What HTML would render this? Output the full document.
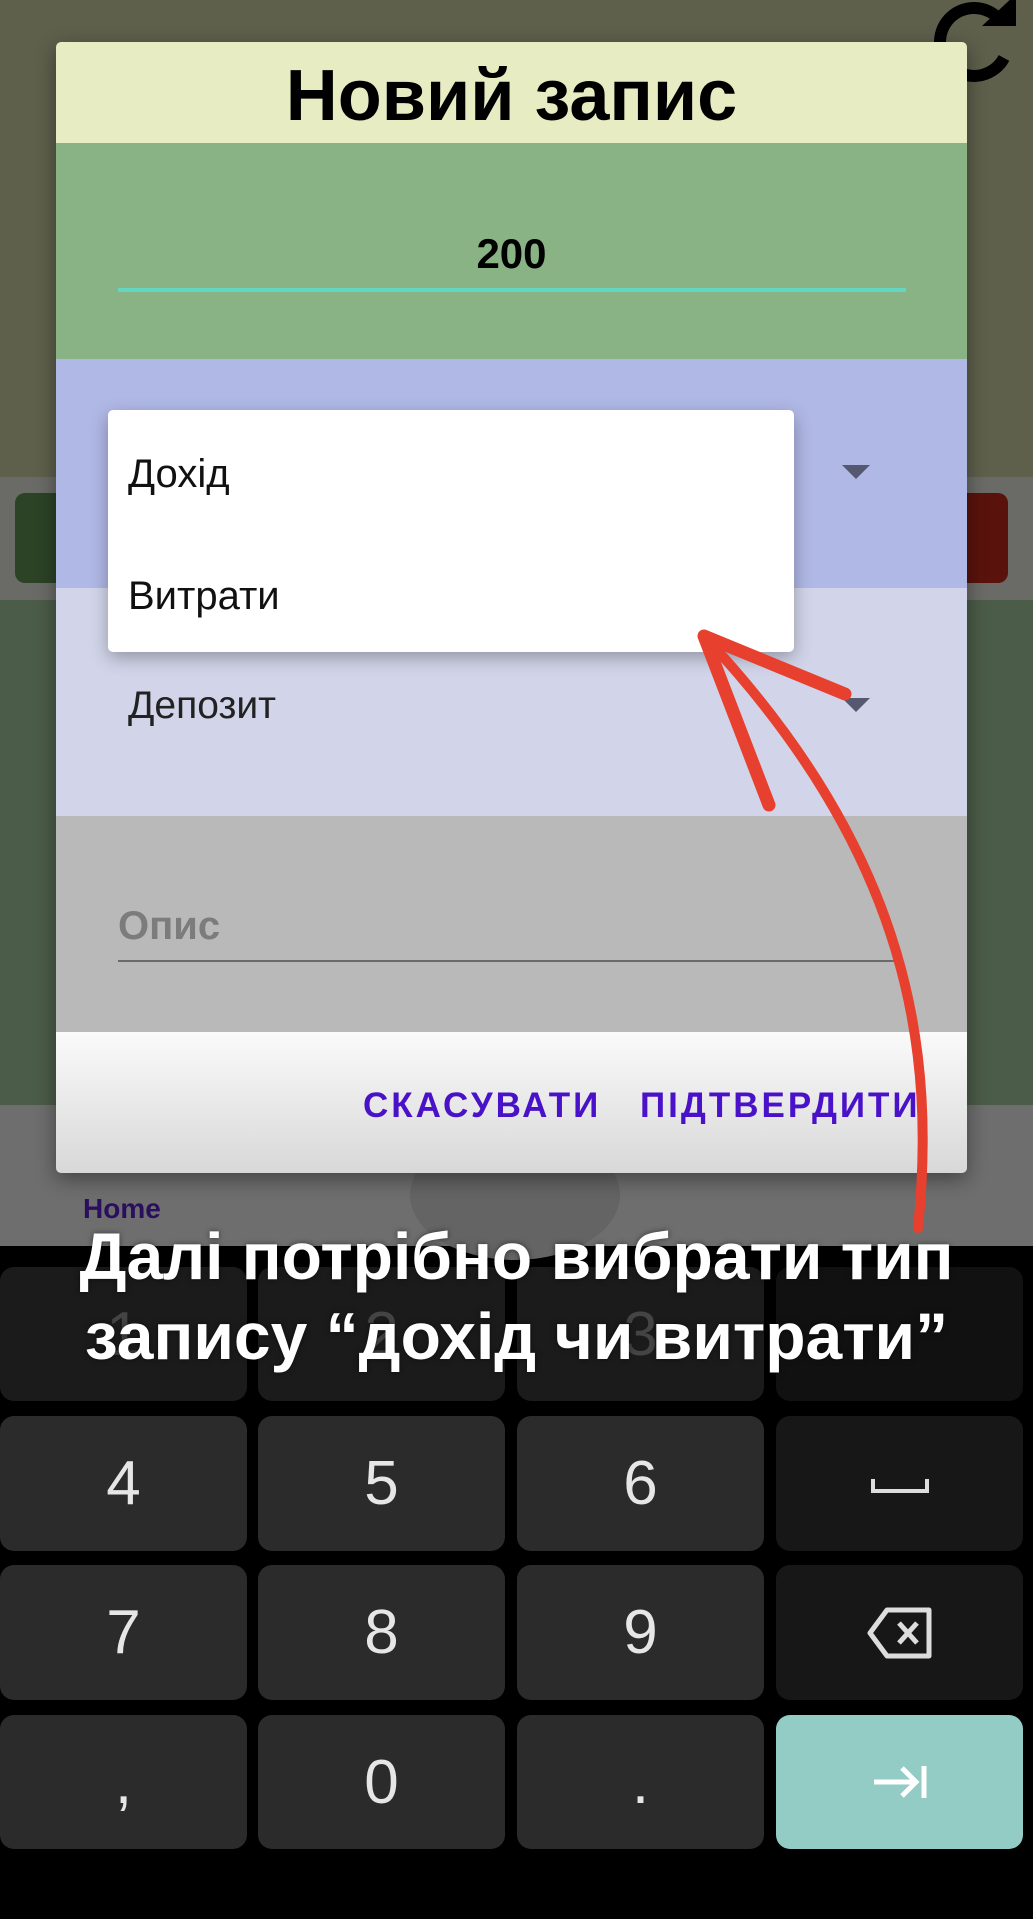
<!DOCTYPE html>
<html><head><meta charset="utf-8"><style>
*{margin:0;padding:0;box-sizing:border-box}
body{width:1033px;height:1919px;overflow:hidden;background:#000;position:relative;font-family:"Liberation Sans","DejaVu Sans",sans-serif}
.a{position:absolute}
.key{position:absolute;background:#2b2b2b;border-radius:14px;color:#e6e6e6;font-size:62px;display:flex;align-items:center;justify-content:center}
.dk{background:#171717}
.dim{background:#1b1b1b;color:#444}
</style></head><body>
<div class="a" style="left:0;top:0;width:1033px;height:477px;background:#5e604c"></div>
<div class="a" style="left:0;top:477px;width:1033px;height:123px;background:#6a6b66"></div>
<div class="a" style="left:15px;top:493px;width:100px;height:90px;background:#2c4326;border-radius:10px"></div>
<div class="a" style="left:930px;top:493px;width:78px;height:90px;background:#5a130c;border-radius:10px"></div>
<div class="a" style="left:0;top:600px;width:1033px;height:505px;background:#4b5c48"></div>
<div class="a" style="left:0;top:1105px;width:1033px;height:141px;background:#6e6e6e"></div>
<div class="a" style="left:83px;top:1193px;font-size:28px;font-weight:bold;color:#2a0f5e">Home</div>
<div class="a" style="left:410px;top:1130px;width:210px;height:130px;border-radius:50%;background:#646464"></div>
<svg class="a" style="left:920px;top:0" width="113" height="90" viewBox="0 0 113 90"><path d="M80 20 A34 34 0 1 0 84 58" fill="none" stroke="#000" stroke-width="12"/><path d="M62 26 L96 26 L96 -6 Z" fill="#000"/></svg>

<div class="a" style="left:56px;top:42px;width:911px;height:1131px;border-radius:5px;overflow:hidden;box-shadow:0 6px 20px rgba(0,0,0,.4)">
 <div style="height:101px;background:#e8ecc2;text-align:center;font-size:72px;font-weight:bold;line-height:108px;color:#000">Новий запис</div>
 <div style="height:216px;background:#89b384;position:relative">
  <div class="a" style="left:0;width:911px;top:87px;text-align:center;font-size:42px;font-weight:bold">200</div>
  <div class="a" style="left:62px;top:145px;width:788px;height:4px;background:#62d6c0"></div>
 </div>
 <div style="height:229px;background:#b0b8e6;position:relative">
  <svg class="a" style="left:786px;top:106px" width="28" height="14"><path d="M0 0H28L14 14Z" fill="#555870"/></svg>
 </div>
 <div style="height:228px;background:#d2d5ea;position:relative">
  <div class="a" style="left:72px;top:96px;font-size:39px;color:#222">Депозит</div>
  <svg class="a" style="left:786px;top:110px" width="28" height="14"><path d="M0 0H28L14 14Z" fill="#555870"/></svg>
 </div>
 <div style="height:216px;background:#b9b9b9;position:relative">
  <div class="a" style="left:62px;top:88px;font-size:40px;font-weight:bold;color:#7c7c7c">Опис</div>
  <div class="a" style="left:62px;top:144px;width:778px;height:2px;background:#6a6a6a"></div>
 </div>
 <div style="height:141px;background:linear-gradient(#fafafa,#d8d8d8);position:relative">
  <div class="a" style="left:307px;top:54px;font-size:35px;font-weight:bold;letter-spacing:3px;color:#4a12c8">СКАСУВАТИ</div>
  <div class="a" style="left:584px;top:54px;font-size:35px;font-weight:bold;letter-spacing:3px;color:#4a12c8">ПІДТВЕРДИТИ</div>
 </div>
</div>
<div class="a" style="left:108px;top:410px;width:686px;height:242px;background:#fff;border-radius:5px;box-shadow:0 6px 18px rgba(0,0,0,.3)">
 <div class="a" style="left:20px;top:42px;font-size:40px;color:#111">Дохід</div>
 <div class="a" style="left:20px;top:164px;font-size:40px;color:#111">Витрати</div>
</div>

<div class="key dim" style="left:0;top:1267px;width:247px;height:134px">1</div>
<div class="key dim" style="left:258px;top:1267px;width:247px;height:134px">2</div>
<div class="key dim" style="left:517px;top:1267px;width:247px;height:134px">3</div>
<div class="key dim" style="left:776px;top:1267px;width:247px;height:134px;background:#111"></div>
<div class="key" style="left:0;top:1416px;width:247px;height:135px">4</div>
<div class="key" style="left:258px;top:1416px;width:247px;height:135px">5</div>
<div class="key" style="left:517px;top:1416px;width:247px;height:135px">6</div>
<div class="key dk" style="left:776px;top:1416px;width:247px;height:135px"><svg width="60" height="30"><path d="M3 10V22H57V10" fill="none" stroke="#ddd" stroke-width="4"/></svg></div>
<div class="key" style="left:0;top:1565px;width:247px;height:135px">7</div>
<div class="key" style="left:258px;top:1565px;width:247px;height:135px">8</div>
<div class="key" style="left:517px;top:1565px;width:247px;height:135px">9</div>
<div class="key dk" style="left:776px;top:1565px;width:247px;height:135px"><svg width="66" height="52" viewBox="0 0 66 52"><path d="M20 3H62V49H20L3 26Z" fill="none" stroke="#ddd" stroke-width="5" stroke-linejoin="round"/><path d="M32 16L50 36M50 16L32 36" stroke="#ddd" stroke-width="5"/></svg></div>
<div class="key" style="left:0;top:1715px;width:247px;height:134px">,</div>
<div class="key" style="left:258px;top:1715px;width:247px;height:134px">0</div>
<div class="key" style="left:517px;top:1715px;width:247px;height:134px">.</div>
<div class="key" style="left:776px;top:1715px;width:247px;height:134px;background:#93cbc5"><svg width="56" height="40"><path d="M2 20H44M30 6L44 20L30 34" fill="none" stroke="#fff" stroke-width="5"/><path d="M52 4V36" stroke="#fff" stroke-width="5"/></svg></div>

<div class="a" style="left:0;top:1216px;width:1033px;text-align:center;color:#fff;font-size:66px;font-weight:bold;line-height:80px;text-shadow:0 0 6px rgba(0,0,0,.5)">Далі потрібно вибрати тип<br>запису “дохід чи витрати”</div>

<svg class="a" style="left:0;top:0" width="1033" height="1919">
<path d="M918 1228 C935 1060 915 860 704 636" fill="none" stroke="#e8402e" stroke-width="10" stroke-linecap="round"/>
<path d="M704 636 L845 694 M704 636 L769 805" fill="none" stroke="#e8402e" stroke-width="13" stroke-linecap="round"/>
</svg>
</body></html>
